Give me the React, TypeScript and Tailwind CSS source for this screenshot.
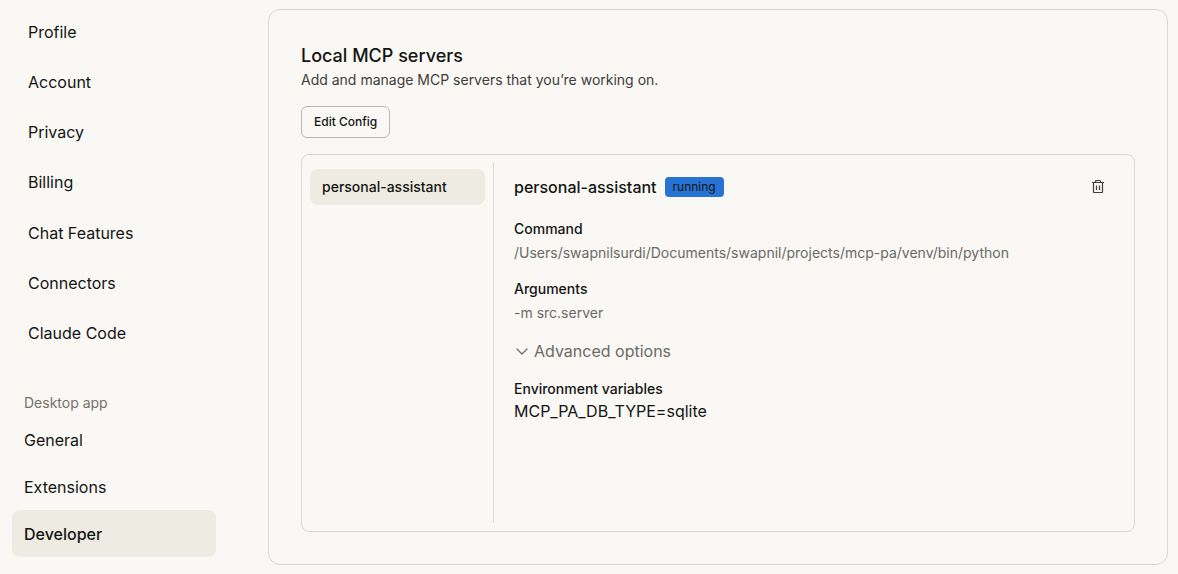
import { useState } from "react";

const accountLinks = [
  "Profile",
  "Account",
  "Privacy",
  "Billing",
  "Chat Features",
  "Connectors",
  "Claude Code",
];

const desktopLinks = ["General", "Extensions", "Developer"];

function TrashIcon() {
  return (
    <svg
      viewBox="0 0 16 16"
      className="size-4"
      fill="none"
      stroke="currentColor"
      strokeWidth="1.2"
      aria-hidden="true"
    >
      <path d="M2 3.5h12M5.5 3.5v-1q0-1 1-1h3q1 0 1 1v1M3.5 3.5v9.5q0 .5.5.5h8q.5 0 .5-.5v-9.5M6.5 6.5v4.5M9.5 6.5v4.5" />
    </svg>
  );
}

function ChevronIcon({ open }: { open: boolean }) {
  return (
    <svg
      viewBox="0 0 16 16"
      className={open ? "size-4" : "size-4 -rotate-90"}
      fill="none"
      stroke="currentColor"
      strokeWidth="1.2"
      strokeLinecap="round"
      strokeLinejoin="round"
      aria-hidden="true"
    >
      <path d="M3 6l5 5 5-5" />
    </svg>
  );
}

function Sidebar() {
  return (
    <nav aria-label="Settings" className="flex w-[204px] shrink-0 flex-col pb-2">
      <ul className="grid flex-1 auto-rows-fr">
        {accountLinks.map((label) => (
          <li key={label} className="flex">
            <a href="#" className="flex flex-1 items-center rounded-lg px-4">
              {label}
            </a>
          </li>
        ))}
      </ul>
      <h2 className="mt-[35px] mb-[3px] px-3 text-sm leading-5 text-[#73726c]">Desktop app</h2>
      <ul>
        {desktopLinks.map((label) => (
          <li key={label}>
            <a
              href="#"
              aria-current={label === "Developer" ? "page" : undefined}
              className="flex h-[47px] items-center rounded-lg px-3 aria-[current=page]:bg-[#eeece2] aria-[current=page]:font-medium"
            >
              {label}
            </a>
          </li>
        ))}
      </ul>
    </nav>
  );
}

function ServerDetails() {
  const [open, setOpen] = useState(true);
  return (
    <section className="min-w-0 flex-1 py-3 pr-5 pl-5">
      <div className="flex h-6 items-center gap-2">
        <h3 className="font-medium">personal-assistant</h3>
        <span className="rounded-sm bg-[#2673d4] px-2 text-xs leading-5">running</span>
        <button type="button" aria-label="Delete server" className="ml-auto text-[#3d3d3a]">
          <TrashIcon />
        </button>
      </div>
      <dl className="mt-5 text-sm leading-5">
        <dt className="font-medium">Command</dt>
        <dd className="mt-1 break-all text-[#6b6a66]">
          /Users/swapnilsurdi/Documents/swapnil/projects/mcp-pa/venv/bin/python
        </dd>
        <dt className="mt-4 font-medium">Arguments</dt>
        <dd className="mt-1 text-[#6b6a66]">-m src.server</dd>
      </dl>
      <button
        type="button"
        aria-expanded={open}
        onClick={() => setOpen(!open)}
        className="mt-4 flex items-center gap-1 text-[#6b6a66]"
      >
        <ChevronIcon open={open} />
        Advanced options
      </button>
      {open && (
        <div className="mt-4">
          <h4 className="text-sm leading-5 font-medium">Environment variables</h4>
          <p>MCP_PA_DB_TYPE=sqlite</p>
        </div>
      )}
    </section>
  );
}

export default function App() {
  return (
    <div className="flex min-h-screen gap-[52px] bg-[#f9f8f4] pt-[7px] pr-[10px] pb-[9px] pl-3 font-[Inter,sans-serif] text-base leading-6 text-[#141413]">
      <Sidebar />
      <main className="mt-0.5 min-w-0 flex-1 rounded-xl border border-[#d9d8d3] p-8">
        <h1 className="text-lg leading-7 font-medium">Local MCP servers</h1>
        <p className="text-sm leading-5 text-[#3d3d3a]">
          Add and manage MCP servers that you’re working on.
        </p>
        <button
          type="button"
          className="mt-4 block h-8 rounded-md border border-[#b8b7b2] px-3 text-xs font-medium"
        >
          Edit Config
        </button>
        <div className="mt-4 flex rounded-lg border border-[#d9d8d3] p-2">
          <ul className="w-[184px] shrink-0 border-r border-[#d9d8d3] pt-1.5 pr-2">
            <li>
              <button
                type="button"
                className="h-9 w-full rounded-lg bg-[#eeece2] px-3 text-left text-sm font-medium"
              >
                personal-assistant
              </button>
            </li>
          </ul>
          <div className="flex min-h-[360px] min-w-0 flex-1">
            <ServerDetails />
          </div>
        </div>
      </main>
    </div>
  );
}
